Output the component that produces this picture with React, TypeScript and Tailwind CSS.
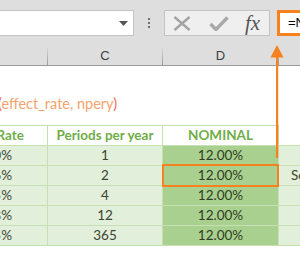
export default function App() {
  const rows = [
    ["12.00%", "1", ""],
    ["12.36%", "2", "Semi-annually"],
    ["12.55%", "4", ""],
    ["12.68%", "12", ""],
    ["12.75%", "365", ""],
  ];
  return (
    <div className="relative w-[300px] h-[266px] overflow-hidden bg-white font-[Lato,sans-serif]">
      {/* Toolbar */}
      <div className="h-[44px] bg-[#dedede] flex items-start pt-[10px]">
        <div className="w-[134px] h-[26px] shrink-0 bg-white border border-l-0 border-[#c3c3c3] flex items-center justify-end pr-[5px]">
          <svg width="9" height="5" viewBox="0 0 9 5">
            <path d="M0 0h9L4.5 5z" fill="#555" />
          </svg>
        </div>
        <div className="ml-[14px] mt-[8px] flex flex-col gap-[2px] shrink-0">
          <div className="w-[2px] h-[2px] bg-[#707070]" />
          <div className="w-[2px] h-[2px] bg-[#707070]" />
          <div className="w-[2px] h-[2px] bg-[#707070]" />
        </div>
        <div className="ml-[14px] w-[106px] h-[26px] shrink-0 border border-[#c3c3c3] bg-[#efefef] flex items-center">
          <svg width="18" height="15" viewBox="0 0 18 15" className="ml-[8px]">
            <path d="M1.5 1L16.5 14M16.5 1L1.5 14" stroke="#a3a3a3" strokeWidth="2.4" />
          </svg>
          <svg width="20" height="15" viewBox="0 0 20 15" className="ml-[18px]">
            <path d="M1.5 8L7 13.5L18.5 1.5" stroke="#a8a8a8" strokeWidth="3.4" fill="none" />
          </svg>
          <span className="ml-[16px] font-['Liberation_Serif',serif] italic text-[21px] leading-none text-[#555555]">fx</span>
        </div>
        <div className="ml-[7px] w-[40px] h-[26px] shrink-0 border-[3px] border-r-0 border-[#f5821f] bg-white flex items-center pl-[8px] text-[13px] text-black font-['Liberation_Sans',sans-serif] whitespace-nowrap">
          =NOMINAL
        </div>
      </div>

      {/* Column headers */}
      <div className="h-[22px] bg-[#dedede] border-b border-[#9a9a9a] flex text-[13px] text-[#3f3f3f] font-['Liberation_Sans',sans-serif]">
        <div className="w-[47px] shrink-0" />
        <div className="w-px h-[19px] mt-[2px] shrink-0 bg-gradient-to-b from-[#dedede] to-[#9a9a9a]" />
        <div className="w-[114px] shrink-0 flex items-center justify-center pt-[2px]">C</div>
        <div className="w-px h-[19px] mt-[2px] shrink-0 bg-gradient-to-b from-[#dedede] to-[#9a9a9a]" />
        <div className="w-[115px] shrink-0 flex items-center justify-center pt-[2px]">D</div>
        <div className="w-px h-[19px] mt-[2px] shrink-0 bg-gradient-to-b from-[#dedede] to-[#9a9a9a]" />
        <div className="flex-1" />
      </div>

      {/* Formula hint area */}
      <div className="h-[59px] flex items-center pt-[16px]">
        <div className="ml-[-2px] text-[14.5px] whitespace-nowrap text-[#f5a36e]">
          <span className="text-[#ee6a5c]">(</span>effect_rate, npery<span className="text-[#ee6a5c]">)</span>
        </div>
      </div>

      {/* Table */}
      <div className="flex flex-col text-[13.5px]">
        <div className="flex h-[21px]">
          <div className="w-[48px] shrink-0 border-t border-b border-r border-[#c6e0b4] bg-white flex items-center justify-end pr-[23px] font-bold text-[#70ad47] whitespace-nowrap">
            Effective Rate
          </div>
          <div className="w-[115px] shrink-0 border-t border-b border-r border-[#c6e0b4] bg-white flex items-center justify-center font-bold text-[#70ad47] whitespace-nowrap">
            Periods per year
          </div>
          <div className="w-[116px] shrink-0 border-t border-b border-r border-[#c6e0b4] bg-white flex items-center justify-center font-bold text-[#70ad47]">
            NOMINAL
          </div>
          <div className="flex-1 border-b border-[#c6e0b4] bg-white" />
        </div>
        {rows.map((r, i) => (
          <div key={i} className="flex h-[20px]">
            <div className="w-[48px] shrink-0 border-b border-r border-[#c6e0b4] bg-[#e2efda] flex items-center justify-end pr-[35px] text-[#3c4530] whitespace-nowrap">
              {r[0]}
            </div>
            <div className="w-[115px] shrink-0 border-b border-r border-[#c6e0b4] bg-[#e2efda] flex items-center justify-center text-[#3c4530]">
              {r[1]}
            </div>
            <div className="w-[116px] shrink-0 border-b border-r border-[#c6e0b4] bg-[#a9d08e] flex items-center justify-center text-[#2f3d25]">
              12.00%
            </div>
            <div className="flex-1 border-b border-[#c6e0b4] bg-[#e2efda] flex items-center pl-[12px] text-[#3c4530] whitespace-nowrap overflow-hidden">
              {r[2]}
            </div>
          </div>
        ))}
      </div>

      {/* Annotation overlays */}
      <svg className="absolute left-[269px] top-[44px]" width="16" height="116" viewBox="0 0 16 116">
        <path d="M8 1L1.5 13.5H14.5z" fill="#f5821f" />
        <rect x="7" y="13" width="2.2" height="101" fill="#f5821f" />
      </svg>
      <div className="absolute left-[162px] top-[164px] w-[117px] h-[23px] border-2 border-[#f5821f]" />
    </div>
  );
}
